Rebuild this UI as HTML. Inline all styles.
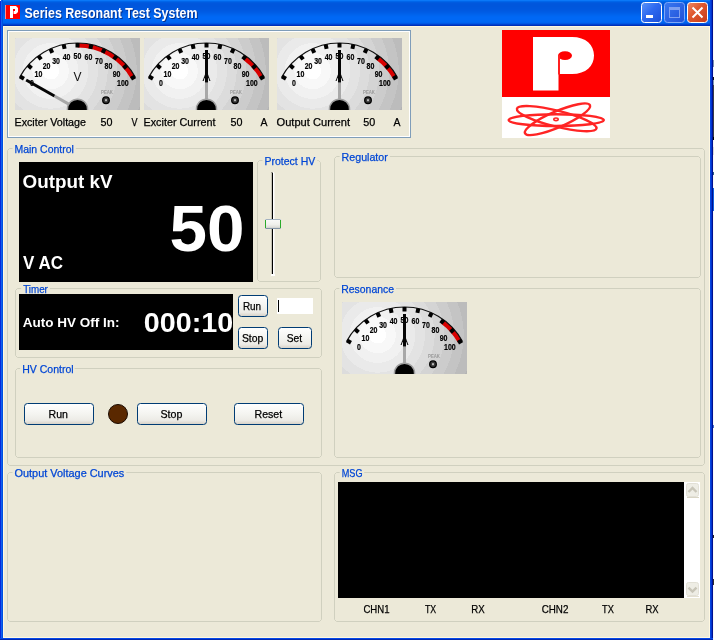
<!DOCTYPE html>
<html><head><meta charset="utf-8"><style>
html,body{margin:0;padding:0;width:714px;height:640px;overflow:hidden;background:#ECE9D8}
</style></head><body>
<svg width="714" height="640" viewBox="0 0 714 640" style="display:block;will-change:transform;font-family:'Liberation Sans', sans-serif">
<defs>
<linearGradient id="title" x1="0" y1="0" x2="0" y2="26" gradientUnits="userSpaceOnUse">
 <stop offset="0" stop-color="#0A72F6"/>
 <stop offset="0.06" stop-color="#0060E6"/>
 <stop offset="0.15" stop-color="#0057DE"/>
 <stop offset="0.45" stop-color="#0058E0"/>
 <stop offset="0.75" stop-color="#0066F2"/>
 <stop offset="0.87" stop-color="#0060EC"/>
 <stop offset="0.92" stop-color="#0050DD"/>
 <stop offset="0.96" stop-color="#0038C4"/>
 <stop offset="1" stop-color="#0030B8"/>
</linearGradient>
<linearGradient id="capmin" x1="0" y1="0" x2="1" y2="1">
 <stop offset="0" stop-color="#5A94F8"/>
 <stop offset="0.45" stop-color="#2E6AF0"/>
 <stop offset="1" stop-color="#1A4FD8"/>
</linearGradient>
<linearGradient id="capmax" x1="0" y1="0" x2="1" y2="1">
 <stop offset="0" stop-color="#3A78F0"/>
 <stop offset="1" stop-color="#2050D8"/>
</linearGradient>
<linearGradient id="capclose" x1="0" y1="0" x2="1" y2="1">
 <stop offset="0" stop-color="#F08A68"/>
 <stop offset="0.4" stop-color="#E05A30"/>
 <stop offset="1" stop-color="#C83C18"/>
</linearGradient>
<linearGradient id="btng" x1="0" y1="0" x2="0" y2="1">
 <stop offset="0" stop-color="#FFFFFF"/>
 <stop offset="0.5" stop-color="#F4F4F0"/>
 <stop offset="0.8" stop-color="#ECEBE6"/>
 <stop offset="1" stop-color="#D6D0C5"/>
</linearGradient>
<radialGradient id="gbg" cx="35.6" cy="33" r="118" gradientUnits="userSpaceOnUse">
 <stop offset="0.0000" stop-color="#FFFFFF"/>
 <stop offset="0.0720" stop-color="#FFFFFF"/>
 <stop offset="0.0720" stop-color="#F8F8F8"/>
 <stop offset="0.1542" stop-color="#F8F8F8"/>
 <stop offset="0.1542" stop-color="#F1F1F1"/>
 <stop offset="0.2364" stop-color="#F1F1F1"/>
 <stop offset="0.2364" stop-color="#EAEAEA"/>
 <stop offset="0.3186" stop-color="#EAEAEA"/>
 <stop offset="0.3186" stop-color="#E3E3E3"/>
 <stop offset="0.4008" stop-color="#E3E3E3"/>
 <stop offset="0.4008" stop-color="#DCDCDC"/>
 <stop offset="0.4831" stop-color="#DCDCDC"/>
 <stop offset="0.4831" stop-color="#D4D4D4"/>
 <stop offset="0.5653" stop-color="#D4D4D4"/>
 <stop offset="0.5653" stop-color="#CCCCCC"/>
 <stop offset="0.6475" stop-color="#CCCCCC"/>
 <stop offset="0.6475" stop-color="#C4C4C4"/>
 <stop offset="0.7297" stop-color="#C4C4C4"/>
 <stop offset="0.7297" stop-color="#BCBCBC"/>
 <stop offset="0.8119" stop-color="#BCBCBC"/>
 <stop offset="0.8119" stop-color="#B4B4B4"/>
 <stop offset="0.8941" stop-color="#B4B4B4"/>
 <stop offset="0.8941" stop-color="#ACACAC"/>
 <stop offset="1.0000" stop-color="#ACACAC"/>
</radialGradient>
<radialGradient id="ledg" cx="0.4" cy="0.4" r="0.6">
 <stop offset="0" stop-color="#C8C8C8"/>
 <stop offset="0.5" stop-color="#808080"/>
 <stop offset="1" stop-color="#404040"/>
</radialGradient>
<linearGradient id="thumbg" x1="0" y1="0" x2="0" y2="1">
 <stop offset="0" stop-color="#F8F8F6"/>
 <stop offset="0.55" stop-color="#F0F0EC"/>
 <stop offset="0.8" stop-color="#E4E4E0"/>
 <stop offset="1" stop-color="#D0D0CC"/>
</linearGradient>
</defs>
<rect x="0" y="0" width="714" height="640" fill="#ECE9D8"/>
<rect x="0" y="0" width="714" height="1" fill="#0A78F8"/>
<rect x="0" y="1" width="714" height="1" fill="#0066EA"/>
<rect x="0" y="2" width="714" height="1" fill="#005BE0"/>
<rect x="0" y="3" width="714" height="1" fill="#0057DD"/>
<rect x="0" y="4" width="714" height="1" fill="#0056DC"/>
<rect x="0" y="5" width="714" height="1" fill="#0056DC"/>
<rect x="0" y="6" width="714" height="1" fill="#0056DC"/>
<rect x="0" y="7" width="714" height="1" fill="#0057DD"/>
<rect x="0" y="8" width="714" height="1" fill="#0057DE"/>
<rect x="0" y="9" width="714" height="1" fill="#0058DF"/>
<rect x="0" y="10" width="714" height="1" fill="#0059E1"/>
<rect x="0" y="11" width="714" height="1" fill="#005BE3"/>
<rect x="0" y="12" width="714" height="1" fill="#005DE6"/>
<rect x="0" y="13" width="714" height="1" fill="#0060E9"/>
<rect x="0" y="14" width="714" height="1" fill="#0063EC"/>
<rect x="0" y="15" width="714" height="1" fill="#0065F0"/>
<rect x="0" y="16" width="714" height="1" fill="#0067F3"/>
<rect x="0" y="17" width="714" height="1" fill="#0068F5"/>
<rect x="0" y="18" width="714" height="1" fill="#0068F5"/>
<rect x="0" y="19" width="714" height="1" fill="#0068F5"/>
<rect x="0" y="20" width="714" height="1" fill="#0068F5"/>
<rect x="0" y="21" width="714" height="1" fill="#0067F4"/>
<rect x="0" y="22" width="714" height="1" fill="#0064F0"/>
<rect x="0" y="23" width="714" height="1" fill="#0058E4"/>
<rect x="0" y="24" width="714" height="1" fill="#0042D0"/>
<rect x="0" y="25" width="714" height="1" fill="#0030B8"/>
<rect x="0" y="0" width="1" height="640" fill="#0828D8"/>
<rect x="1" y="0" width="1" height="640" fill="#1060F0"/>
<rect x="2" y="0" width="1" height="640" fill="#0050E0"/>
<rect x="3" y="26" width="1" height="612" fill="#FFF8E0"/>
<rect x="709" y="26" width="1" height="612" fill="#FFF8E0"/>
<rect x="710" y="0" width="1" height="640" fill="#0544E0"/>
<rect x="711" y="0" width="1" height="640" fill="#0033CC"/>
<rect x="712" y="0" width="1" height="640" fill="#001090"/>
<rect x="713" y="0" width="1" height="640" fill="#F8F8F8"/>
<rect x="713" y="60" width="1" height="7" fill="#7890B0"/>
<rect x="713" y="67" width="1" height="10" fill="#F0F4FF"/>
<rect x="713" y="77" width="1" height="3" fill="#101010"/>
<rect x="713" y="80" width="1" height="5" fill="#8098B0"/>
<rect x="713" y="85" width="1" height="52" fill="#3A3E46"/>
<rect x="713" y="137" width="1" height="3" fill="#000000"/>
<rect x="713" y="140" width="1" height="7" fill="#F4F4F4"/>
<rect x="713" y="147" width="1" height="8" fill="#D8D8D8"/>
<rect x="713" y="172" width="1" height="3" fill="#306080"/>
<rect x="713" y="188" width="1" height="23" fill="#1060E0"/>
<rect x="713" y="425" width="1" height="3" fill="#4070D0"/>
<rect x="713" y="535" width="1" height="3" fill="#202020"/>
<rect x="713" y="579" width="1" height="6" fill="#303030"/>
<rect x="0" y="0" width="1" height="1" fill="#F0F0F0"/>
<rect x="3" y="26" width="707" height="1" fill="#FFF8E0"/>
<rect x="3" y="637" width="707" height="1" fill="#FFF8E0"/>
<rect x="0" y="638" width="713" height="1" fill="#0548E8"/>
<rect x="0" y="639" width="713" height="1" fill="#0028B0"/>
<rect x="5" y="5" width="15" height="14" fill="#FF0000"/>
<rect x="5" y="5" width="1" height="14" fill="#FF9090"/>
<path d="M10,6 H16 L18,8 V12 L16,14 H13 V18 H10 Z" fill="#FFFFFF"/>
<rect x="13" y="9" width="2" height="2" fill="#FF0000"/>
<rect x="13" y="11" width="1" height="3" fill="#FF7070"/>
<text x="25.5" y="19" font-size="14" font-weight="bold" fill="#0A1A60" opacity="0.7" textLength="173" lengthAdjust="spacingAndGlyphs">Series Resonant Test System</text>
<text x="24.5" y="18" font-size="14" font-weight="bold" fill="#FFFFFF" textLength="173" lengthAdjust="spacingAndGlyphs">Series Resonant Test System</text>
<rect x="641.5" y="2.5" width="20" height="20" rx="3" fill="url(#capmin)" stroke="#FFFFFF" stroke-width="1"/>
<rect x="646" y="15" width="7" height="3" fill="#FFFFFF"/>
<rect x="664.5" y="2.5" width="20" height="20" rx="3" fill="url(#capmax)" stroke="#7FA8F8" stroke-width="1"/>
<rect x="669.5" y="7.5" width="10" height="10" fill="none" stroke="#7FA0F0" stroke-width="1"/>
<rect x="669" y="7" width="11" height="3" fill="#7FA0F0"/>
<rect x="687.5" y="2.5" width="20" height="20" rx="3" fill="url(#capclose)" stroke="#FFFFFF" stroke-width="1"/>
<path d="M692.5,7.5 L702.5,17.5 M702.5,7.5 L692.5,17.5" stroke="#FFFFFF" stroke-width="2"/>
<rect x="7.5" y="30.5" width="403" height="107" fill="none" stroke="#7F9DB9"/>
<rect x="8.5" y="31.5" width="401" height="105" fill="none" stroke="#FFFFFF"/>
<g transform="translate(15,38)">
<svg x="0" y="0" width="125" height="72" overflow="hidden">
<rect x="0" y="0" width="125" height="72" fill="url(#gbg)"/>
<path d="M62.50,7.30 A63.7,63.7 0 0 1 117.94,39.63" fill="none" stroke="#D80000" stroke-width="4.6"/>
<path d="M4.50,39.51 A66,66 0 0 1 120.50,39.51" fill="none" stroke="#111" stroke-width="1.2"/>
<line x1="8.97" y1="40.72" x2="5.06" y2="38.50" stroke="#000" stroke-width="4"/>
<line x1="16.51" y1="30.17" x2="13.15" y2="27.18" stroke="#000" stroke-width="4"/>
<line x1="26.09" y1="21.44" x2="23.43" y2="17.81" stroke="#000" stroke-width="4"/>
<line x1="37.29" y1="14.90" x2="35.45" y2="10.80" stroke="#000" stroke-width="4"/>
<line x1="49.61" y1="10.87" x2="48.67" y2="6.47" stroke="#000" stroke-width="4"/>
<line x1="62.50" y1="9.50" x2="62.50" y2="5.00" stroke="#000" stroke-width="4"/>
<line x1="75.39" y1="10.87" x2="76.33" y2="6.47" stroke="#000" stroke-width="4"/>
<line x1="87.71" y1="14.90" x2="89.55" y2="10.80" stroke="#000" stroke-width="4"/>
<line x1="98.91" y1="21.44" x2="101.57" y2="17.81" stroke="#000" stroke-width="4"/>
<line x1="108.49" y1="30.17" x2="111.85" y2="27.18" stroke="#000" stroke-width="4"/>
<line x1="116.03" y1="40.72" x2="119.94" y2="38.50" stroke="#000" stroke-width="4"/>
<text x="17.07" y="47.70" font-size="9.6" font-weight="bold" fill="#000" stroke="#000" stroke-width="0.2" text-anchor="middle" textLength="3.9" lengthAdjust="spacingAndGlyphs">0</text>
<text x="23.46" y="38.74" font-size="9.6" font-weight="bold" fill="#000" stroke="#000" stroke-width="0.2" text-anchor="middle" textLength="7.8" lengthAdjust="spacingAndGlyphs">10</text>
<text x="31.60" y="31.33" font-size="9.6" font-weight="bold" fill="#000" stroke="#000" stroke-width="0.2" text-anchor="middle" textLength="7.8" lengthAdjust="spacingAndGlyphs">20</text>
<text x="41.10" y="25.79" font-size="9.6" font-weight="bold" fill="#000" stroke="#000" stroke-width="0.2" text-anchor="middle" textLength="7.8" lengthAdjust="spacingAndGlyphs">30</text>
<text x="51.56" y="22.36" font-size="9.6" font-weight="bold" fill="#000" stroke="#000" stroke-width="0.2" text-anchor="middle" textLength="7.8" lengthAdjust="spacingAndGlyphs">40</text>
<text x="62.50" y="21.20" font-size="9.6" font-weight="bold" fill="#000" stroke="#000" stroke-width="0.2" text-anchor="middle" textLength="7.8" lengthAdjust="spacingAndGlyphs">50</text>
<text x="73.44" y="22.36" font-size="9.6" font-weight="bold" fill="#000" stroke="#000" stroke-width="0.2" text-anchor="middle" textLength="7.8" lengthAdjust="spacingAndGlyphs">60</text>
<text x="83.90" y="25.79" font-size="9.6" font-weight="bold" fill="#000" stroke="#000" stroke-width="0.2" text-anchor="middle" textLength="7.8" lengthAdjust="spacingAndGlyphs">70</text>
<text x="93.40" y="31.33" font-size="9.6" font-weight="bold" fill="#000" stroke="#000" stroke-width="0.2" text-anchor="middle" textLength="7.8" lengthAdjust="spacingAndGlyphs">80</text>
<text x="101.54" y="38.74" font-size="9.6" font-weight="bold" fill="#000" stroke="#000" stroke-width="0.2" text-anchor="middle" textLength="7.8" lengthAdjust="spacingAndGlyphs">90</text>
<text x="107.93" y="47.70" font-size="9.6" font-weight="bold" fill="#000" stroke="#000" stroke-width="0.2" text-anchor="middle" textLength="11.7" lengthAdjust="spacingAndGlyphs">100</text>
<text x="62.5" y="43" font-size="12.5" fill="#111" text-anchor="middle" textLength="8" lengthAdjust="spacingAndGlyphs">V</text>
<text x="92" y="56" font-size="5" font-weight="bold" fill="#9A9A9A" text-anchor="middle" textLength="12" lengthAdjust="spacingAndGlyphs">PEAK</text>
<circle cx="91" cy="62.2" r="3.3" fill="#3A3A3A" stroke="#000" stroke-width="1.3"/>
<rect x="90" y="61.2" width="2" height="2" fill="#B8B8B8"/>
<line x1="54.67" y1="66.57" x2="39.44" y2="57.95" stroke="#A8A8A8" stroke-width="3"/>
<line x1="39.44" y1="57.95" x2="11.15" y2="41.95" stroke="#050505" stroke-width="3"/>
<circle cx="62.5" cy="71.2" r="10.05" fill="#000" stroke="#A0A0A0" stroke-width="1.5"/>
</svg></g>
<g transform="translate(144,38)">
<svg x="0" y="0" width="125" height="72" overflow="hidden">
<rect x="0" y="0" width="125" height="72" fill="url(#gbg)"/>
<path d="M100.21,19.66 A63.7,63.7 0 0 1 117.94,39.63" fill="none" stroke="#D80000" stroke-width="4.6"/>
<path d="M4.50,39.51 A66,66 0 0 1 120.50,39.51" fill="none" stroke="#111" stroke-width="1.2"/>
<line x1="8.97" y1="40.72" x2="5.06" y2="38.50" stroke="#000" stroke-width="4"/>
<line x1="16.51" y1="30.17" x2="13.15" y2="27.18" stroke="#000" stroke-width="4"/>
<line x1="26.09" y1="21.44" x2="23.43" y2="17.81" stroke="#000" stroke-width="4"/>
<line x1="37.29" y1="14.90" x2="35.45" y2="10.80" stroke="#000" stroke-width="4"/>
<line x1="49.61" y1="10.87" x2="48.67" y2="6.47" stroke="#000" stroke-width="4"/>
<line x1="62.50" y1="9.50" x2="62.50" y2="5.00" stroke="#000" stroke-width="4"/>
<line x1="75.39" y1="10.87" x2="76.33" y2="6.47" stroke="#000" stroke-width="4"/>
<line x1="87.71" y1="14.90" x2="89.55" y2="10.80" stroke="#000" stroke-width="4"/>
<line x1="98.91" y1="21.44" x2="101.57" y2="17.81" stroke="#000" stroke-width="4"/>
<line x1="108.49" y1="30.17" x2="111.85" y2="27.18" stroke="#000" stroke-width="4"/>
<line x1="116.03" y1="40.72" x2="119.94" y2="38.50" stroke="#000" stroke-width="4"/>
<text x="17.07" y="47.70" font-size="9.6" font-weight="bold" fill="#000" stroke="#000" stroke-width="0.2" text-anchor="middle" textLength="3.9" lengthAdjust="spacingAndGlyphs">0</text>
<text x="23.46" y="38.74" font-size="9.6" font-weight="bold" fill="#000" stroke="#000" stroke-width="0.2" text-anchor="middle" textLength="7.8" lengthAdjust="spacingAndGlyphs">10</text>
<text x="31.60" y="31.33" font-size="9.6" font-weight="bold" fill="#000" stroke="#000" stroke-width="0.2" text-anchor="middle" textLength="7.8" lengthAdjust="spacingAndGlyphs">20</text>
<text x="41.10" y="25.79" font-size="9.6" font-weight="bold" fill="#000" stroke="#000" stroke-width="0.2" text-anchor="middle" textLength="7.8" lengthAdjust="spacingAndGlyphs">30</text>
<text x="51.56" y="22.36" font-size="9.6" font-weight="bold" fill="#000" stroke="#000" stroke-width="0.2" text-anchor="middle" textLength="7.8" lengthAdjust="spacingAndGlyphs">40</text>
<text x="62.50" y="21.20" font-size="9.6" font-weight="bold" fill="#000" stroke="#000" stroke-width="0.2" text-anchor="middle" textLength="7.8" lengthAdjust="spacingAndGlyphs">50</text>
<text x="73.44" y="22.36" font-size="9.6" font-weight="bold" fill="#000" stroke="#000" stroke-width="0.2" text-anchor="middle" textLength="7.8" lengthAdjust="spacingAndGlyphs">60</text>
<text x="83.90" y="25.79" font-size="9.6" font-weight="bold" fill="#000" stroke="#000" stroke-width="0.2" text-anchor="middle" textLength="7.8" lengthAdjust="spacingAndGlyphs">70</text>
<text x="93.40" y="31.33" font-size="9.6" font-weight="bold" fill="#000" stroke="#000" stroke-width="0.2" text-anchor="middle" textLength="7.8" lengthAdjust="spacingAndGlyphs">80</text>
<text x="101.54" y="38.74" font-size="9.6" font-weight="bold" fill="#000" stroke="#000" stroke-width="0.2" text-anchor="middle" textLength="7.8" lengthAdjust="spacingAndGlyphs">90</text>
<text x="107.93" y="47.70" font-size="9.6" font-weight="bold" fill="#000" stroke="#000" stroke-width="0.2" text-anchor="middle" textLength="11.7" lengthAdjust="spacingAndGlyphs">100</text>
<text x="62.5" y="43" font-size="12.5" fill="#111" text-anchor="middle" textLength="8" lengthAdjust="spacingAndGlyphs">A</text>
<text x="92" y="56" font-size="5" font-weight="bold" fill="#9A9A9A" text-anchor="middle" textLength="12" lengthAdjust="spacingAndGlyphs">PEAK</text>
<circle cx="91" cy="62.2" r="3.3" fill="#3A3A3A" stroke="#000" stroke-width="1.3"/>
<rect x="90" y="61.2" width="2" height="2" fill="#B8B8B8"/>
<line x1="62.50" y1="62.00" x2="62.50" y2="44.50" stroke="#A8A8A8" stroke-width="3"/>
<line x1="62.50" y1="44.50" x2="62.50" y2="12.00" stroke="#050505" stroke-width="3"/>
<circle cx="62.5" cy="71.2" r="10.05" fill="#000" stroke="#A0A0A0" stroke-width="1.5"/>
</svg></g>
<g transform="translate(277,38)">
<svg x="0" y="0" width="125" height="72" overflow="hidden">
<rect x="0" y="0" width="125" height="72" fill="url(#gbg)"/>
<path d="M100.21,19.66 A63.7,63.7 0 0 1 117.94,39.63" fill="none" stroke="#D80000" stroke-width="4.6"/>
<path d="M4.50,39.51 A66,66 0 0 1 120.50,39.51" fill="none" stroke="#111" stroke-width="1.2"/>
<line x1="8.97" y1="40.72" x2="5.06" y2="38.50" stroke="#000" stroke-width="4"/>
<line x1="16.51" y1="30.17" x2="13.15" y2="27.18" stroke="#000" stroke-width="4"/>
<line x1="26.09" y1="21.44" x2="23.43" y2="17.81" stroke="#000" stroke-width="4"/>
<line x1="37.29" y1="14.90" x2="35.45" y2="10.80" stroke="#000" stroke-width="4"/>
<line x1="49.61" y1="10.87" x2="48.67" y2="6.47" stroke="#000" stroke-width="4"/>
<line x1="62.50" y1="9.50" x2="62.50" y2="5.00" stroke="#000" stroke-width="4"/>
<line x1="75.39" y1="10.87" x2="76.33" y2="6.47" stroke="#000" stroke-width="4"/>
<line x1="87.71" y1="14.90" x2="89.55" y2="10.80" stroke="#000" stroke-width="4"/>
<line x1="98.91" y1="21.44" x2="101.57" y2="17.81" stroke="#000" stroke-width="4"/>
<line x1="108.49" y1="30.17" x2="111.85" y2="27.18" stroke="#000" stroke-width="4"/>
<line x1="116.03" y1="40.72" x2="119.94" y2="38.50" stroke="#000" stroke-width="4"/>
<text x="17.07" y="47.70" font-size="9.6" font-weight="bold" fill="#000" stroke="#000" stroke-width="0.2" text-anchor="middle" textLength="3.9" lengthAdjust="spacingAndGlyphs">0</text>
<text x="23.46" y="38.74" font-size="9.6" font-weight="bold" fill="#000" stroke="#000" stroke-width="0.2" text-anchor="middle" textLength="7.8" lengthAdjust="spacingAndGlyphs">10</text>
<text x="31.60" y="31.33" font-size="9.6" font-weight="bold" fill="#000" stroke="#000" stroke-width="0.2" text-anchor="middle" textLength="7.8" lengthAdjust="spacingAndGlyphs">20</text>
<text x="41.10" y="25.79" font-size="9.6" font-weight="bold" fill="#000" stroke="#000" stroke-width="0.2" text-anchor="middle" textLength="7.8" lengthAdjust="spacingAndGlyphs">30</text>
<text x="51.56" y="22.36" font-size="9.6" font-weight="bold" fill="#000" stroke="#000" stroke-width="0.2" text-anchor="middle" textLength="7.8" lengthAdjust="spacingAndGlyphs">40</text>
<text x="62.50" y="21.20" font-size="9.6" font-weight="bold" fill="#000" stroke="#000" stroke-width="0.2" text-anchor="middle" textLength="7.8" lengthAdjust="spacingAndGlyphs">50</text>
<text x="73.44" y="22.36" font-size="9.6" font-weight="bold" fill="#000" stroke="#000" stroke-width="0.2" text-anchor="middle" textLength="7.8" lengthAdjust="spacingAndGlyphs">60</text>
<text x="83.90" y="25.79" font-size="9.6" font-weight="bold" fill="#000" stroke="#000" stroke-width="0.2" text-anchor="middle" textLength="7.8" lengthAdjust="spacingAndGlyphs">70</text>
<text x="93.40" y="31.33" font-size="9.6" font-weight="bold" fill="#000" stroke="#000" stroke-width="0.2" text-anchor="middle" textLength="7.8" lengthAdjust="spacingAndGlyphs">80</text>
<text x="101.54" y="38.74" font-size="9.6" font-weight="bold" fill="#000" stroke="#000" stroke-width="0.2" text-anchor="middle" textLength="7.8" lengthAdjust="spacingAndGlyphs">90</text>
<text x="107.93" y="47.70" font-size="9.6" font-weight="bold" fill="#000" stroke="#000" stroke-width="0.2" text-anchor="middle" textLength="11.7" lengthAdjust="spacingAndGlyphs">100</text>
<text x="62.5" y="43" font-size="12.5" fill="#111" text-anchor="middle" textLength="8" lengthAdjust="spacingAndGlyphs">A</text>
<text x="92" y="56" font-size="5" font-weight="bold" fill="#9A9A9A" text-anchor="middle" textLength="12" lengthAdjust="spacingAndGlyphs">PEAK</text>
<circle cx="91" cy="62.2" r="3.3" fill="#3A3A3A" stroke="#000" stroke-width="1.3"/>
<rect x="90" y="61.2" width="2" height="2" fill="#B8B8B8"/>
<line x1="62.50" y1="62.00" x2="62.50" y2="44.50" stroke="#A8A8A8" stroke-width="3"/>
<line x1="62.50" y1="44.50" x2="62.50" y2="12.00" stroke="#050505" stroke-width="3"/>
<circle cx="62.5" cy="71.2" r="10.05" fill="#000" stroke="#A0A0A0" stroke-width="1.5"/>
</svg></g>
<text x="14.5" y="126" font-size="11" font-weight="normal" fill="#000" text-anchor="start" textLength="71.5" lengthAdjust="spacingAndGlyphs" stroke="#000" stroke-width="0.25" >Exciter Voltage</text>
<text x="100.5" y="126" font-size="11" font-weight="normal" fill="#000" text-anchor="start" textLength="12" lengthAdjust="spacingAndGlyphs" stroke="#000" stroke-width="0.25" >50</text>
<text x="131.5" y="126" font-size="11" font-weight="normal" fill="#000" text-anchor="start" textLength="6" lengthAdjust="spacingAndGlyphs" stroke="#000" stroke-width="0.25" >V</text>
<text x="143.5" y="126" font-size="11" font-weight="normal" fill="#000" text-anchor="start" textLength="72" lengthAdjust="spacingAndGlyphs" stroke="#000" stroke-width="0.25" >Exciter Current</text>
<text x="230.5" y="126" font-size="11" font-weight="normal" fill="#000" text-anchor="start" textLength="12" lengthAdjust="spacingAndGlyphs" stroke="#000" stroke-width="0.25" >50</text>
<text x="260.5" y="126" font-size="11" font-weight="normal" fill="#000" text-anchor="start" textLength="7" lengthAdjust="spacingAndGlyphs" stroke="#000" stroke-width="0.25" >A</text>
<text x="276.5" y="126" font-size="11" font-weight="normal" fill="#000" text-anchor="start" textLength="73.5" lengthAdjust="spacingAndGlyphs" stroke="#000" stroke-width="0.25" >Output Current</text>
<text x="363.3" y="126" font-size="11" font-weight="normal" fill="#000" text-anchor="start" textLength="12" lengthAdjust="spacingAndGlyphs" stroke="#000" stroke-width="0.25" >50</text>
<text x="393.5" y="126" font-size="11" font-weight="normal" fill="#000" text-anchor="start" textLength="7" lengthAdjust="spacingAndGlyphs" stroke="#000" stroke-width="0.25" >A</text>
<rect x="502" y="30" width="108" height="108" fill="#FFFFFF"/>
<rect x="502" y="30" width="108" height="67" fill="#FF0000"/>
<path d="M533,37 H572 C586,37 594,45 594,55.5 C594,66 586,74 572,74 H558.5 V90.5 H533 Z" fill="#FFFFFF"/>
<ellipse cx="565" cy="55.6" rx="7" ry="4.4" fill="#FF0000"/>
<rect x="558" y="55" width="2" height="19.5" fill="#FF2020"/>
<g fill="none" stroke="#FF2424" stroke-width="2.4"><ellipse cx="556.2" cy="120.1" rx="47.6" ry="5.9"/><ellipse cx="0" cy="0" rx="41" ry="8" transform="translate(556.7,118.6) rotate(14)"/><ellipse cx="0" cy="0" rx="35.4" ry="8" transform="translate(557.5,119.3) rotate(-23.3)"/><ellipse cx="556" cy="119.3" rx="2.2" ry="1.3" stroke-width="1.6"/></g>
<path d="M12.5,148.5 L9.5,148.5 L7.5,150.5 L7.5,463.5 L9.5,465.5 L702.5,465.5 L704.5,463.5 L704.5,150.5 L702.5,148.5 L75.8,148.5" fill="none" stroke="#D0D0BF" stroke-width="1"/>
<text x="14.5" y="153" font-size="11" font-weight="normal" fill="#0046D5" text-anchor="start" textLength="59.3" lengthAdjust="spacingAndGlyphs" stroke="#0046D5" stroke-width="0.25" >Main Control</text>
<rect x="19" y="162" width="234" height="120" fill="#000"/>
<text x="22.5" y="188" font-size="17.5" font-weight="bold" fill="#FFFFFF" text-anchor="start" textLength="90" lengthAdjust="spacingAndGlyphs" >Output kV</text>
<text x="169.5" y="251" font-size="65" font-weight="bold" fill="#FFFFFF" text-anchor="start" textLength="75" lengthAdjust="spacingAndGlyphs" >50</text>
<text x="23" y="269" font-size="17.5" font-weight="bold" fill="#FFFFFF" text-anchor="start" textLength="40" lengthAdjust="spacingAndGlyphs" >V AC</text>
<path d="M262.5,160.5 L259.5,160.5 L257.5,162.5 L257.5,279.5 L259.5,281.5 L318.5,281.5 L320.5,279.5 L320.5,162.5 L318.5,160.5 L317.3,160.5" fill="none" stroke="#D0D0BF" stroke-width="1"/>
<text x="264.5" y="164.7" font-size="11" font-weight="normal" fill="#0046D5" text-anchor="start" textLength="50.8" lengthAdjust="spacingAndGlyphs" stroke="#0046D5" stroke-width="0.25" >Protect HV</text>
<rect x="271" y="173" width="1" height="101" fill="#C4C2B4"/>
<rect x="271" y="172" width="2" height="1" fill="#9C9A90"/>
<rect x="272" y="173" width="1" height="101" fill="#000"/>
<rect x="273" y="172" width="1" height="104" fill="#FFFFFF"/>
<rect x="274" y="173" width="1" height="102" fill="#F6F4EC"/>
<rect x="271" y="274" width="4" height="2" fill="#FFFFFF"/>
<rect x="266" y="220" width="14" height="8" fill="url(#thumbg)"/>
<rect x="266" y="219" width="14" height="1" fill="#A4B2C0"/>
<rect x="266" y="228" width="14" height="1" fill="#8494A6"/>
<rect x="265" y="220" width="1" height="8" fill="#2AAA2A"/>
<rect x="280" y="220" width="1" height="8" fill="#2AAA2A"/>
<rect x="265" y="219" width="1" height="1" fill="#C8D0D8"/>
<rect x="280" y="219" width="1" height="1" fill="#C8D0D8"/>
<rect x="265" y="228" width="1" height="1" fill="#B0B8C0"/>
<rect x="280" y="228" width="1" height="1" fill="#B0B8C0"/>
<path d="M339.6,156.5 L336.5,156.5 L334.5,158.5 L334.5,275.5 L336.5,277.5 L698.5,277.5 L700.5,275.5 L700.5,158.5 L698.5,156.5 L389.8,156.5" fill="none" stroke="#D0D0BF" stroke-width="1"/>
<text x="341.6" y="161" font-size="11" font-weight="normal" fill="#0046D5" text-anchor="start" textLength="46.2" lengthAdjust="spacingAndGlyphs" stroke="#0046D5" stroke-width="0.25" >Regulator</text>
<path d="M21.2,288.5 L17.5,288.5 L15.5,290.5 L15.5,355.5 L17.5,357.5 L319.5,357.5 L321.5,355.5 L321.5,290.5 L319.5,288.5 L49.9,288.5" fill="none" stroke="#D0D0BF" stroke-width="1"/>
<text x="23.2" y="293" font-size="11" font-weight="normal" fill="#0046D5" text-anchor="start" textLength="24.7" lengthAdjust="spacingAndGlyphs" stroke="#0046D5" stroke-width="0.25" >Timer</text>
<rect x="19" y="294" width="214" height="56" fill="#000"/>
<text x="22.7" y="327" font-size="12" font-weight="bold" fill="#FFFFFF" text-anchor="start" textLength="96.8" lengthAdjust="spacingAndGlyphs" >Auto HV Off In:</text>
<text x="143.8" y="332" font-size="28" font-weight="bold" fill="#FFFFFF" text-anchor="start" textLength="89.4" lengthAdjust="spacingAndGlyphs" >000:10</text>
<rect x="238.5" y="295.5" width="29" height="21" rx="3" ry="3" fill="url(#btng)" stroke="#003C74" stroke-width="1"/>
<text x="242.9" y="310" font-size="11" font-weight="normal" fill="#000" text-anchor="start" textLength="18.2" lengthAdjust="spacingAndGlyphs" stroke="#000" stroke-width="0.25" >Run</text>
<rect x="238.5" y="327.5" width="29" height="21" rx="3" ry="3" fill="url(#btng)" stroke="#003C74" stroke-width="1"/>
<text x="241.9" y="341.7" font-size="11" font-weight="normal" fill="#000" text-anchor="start" textLength="21.4" lengthAdjust="spacingAndGlyphs" stroke="#000" stroke-width="0.25" >Stop</text>
<rect x="278.5" y="327.5" width="33" height="21" rx="3" ry="3" fill="url(#btng)" stroke="#003C74" stroke-width="1"/>
<text x="286.7" y="341.7" font-size="11" font-weight="normal" fill="#000" text-anchor="start" textLength="15.4" lengthAdjust="spacingAndGlyphs" stroke="#000" stroke-width="0.25" >Set</text>
<rect x="277" y="298" width="36" height="16" fill="#FFFFFF"/>
<rect x="278" y="300" width="1" height="12" fill="#000"/>
<path d="M20.2,368.5 L17.5,368.5 L15.5,370.5 L15.5,455.5 L17.5,457.5 L319.5,457.5 L321.5,455.5 L321.5,370.5 L319.5,368.5 L74.6,368.5" fill="none" stroke="#D0D0BF" stroke-width="1"/>
<text x="22.2" y="373" font-size="11" font-weight="normal" fill="#0046D5" text-anchor="start" textLength="51.4" lengthAdjust="spacingAndGlyphs" stroke="#0046D5" stroke-width="0.25" >HV Control</text>
<rect x="24.5" y="403.5" width="69" height="21" rx="3" ry="3" fill="url(#btng)" stroke="#003C74" stroke-width="1"/>
<text x="48.5" y="418" font-size="11" font-weight="normal" fill="#000" text-anchor="start" textLength="19.4" lengthAdjust="spacingAndGlyphs" stroke="#000" stroke-width="0.25" >Run</text>
<circle cx="118" cy="414" r="9.5" fill="#5A2800" stroke="#1A0A00" stroke-width="1"/>
<rect x="137.5" y="403.5" width="69" height="21" rx="3" ry="3" fill="url(#btng)" stroke="#003C74" stroke-width="1"/>
<text x="160.5" y="418" font-size="11" font-weight="normal" fill="#000" text-anchor="start" textLength="21.9" lengthAdjust="spacingAndGlyphs" stroke="#000" stroke-width="0.25" >Stop</text>
<rect x="234.5" y="403.5" width="69" height="21" rx="3" ry="3" fill="url(#btng)" stroke="#003C74" stroke-width="1"/>
<text x="254.5" y="418" font-size="11" font-weight="normal" fill="#000" text-anchor="start" textLength="27.7" lengthAdjust="spacingAndGlyphs" stroke="#000" stroke-width="0.25" >Reset</text>
<path d="M339.3,288.5 L336.5,288.5 L334.5,290.5 L334.5,455.5 L336.5,457.5 L698.5,457.5 L700.5,455.5 L700.5,290.5 L698.5,288.5 L396.0,288.5" fill="none" stroke="#D0D0BF" stroke-width="1"/>
<text x="341.3" y="293.2" font-size="11" font-weight="normal" fill="#0046D5" text-anchor="start" textLength="52.7" lengthAdjust="spacingAndGlyphs" stroke="#0046D5" stroke-width="0.25" >Resonance</text>
<g transform="translate(342,302)">
<svg x="0" y="0" width="125" height="72" overflow="hidden">
<rect x="0" y="0" width="125" height="72" fill="url(#gbg)"/>
<path d="M100.21,19.66 A63.7,63.7 0 0 1 117.94,39.63" fill="none" stroke="#D80000" stroke-width="4.6"/>
<path d="M4.50,39.51 A66,66 0 0 1 120.50,39.51" fill="none" stroke="#111" stroke-width="1.2"/>
<line x1="8.97" y1="40.72" x2="5.06" y2="38.50" stroke="#000" stroke-width="4"/>
<line x1="16.51" y1="30.17" x2="13.15" y2="27.18" stroke="#000" stroke-width="4"/>
<line x1="26.09" y1="21.44" x2="23.43" y2="17.81" stroke="#000" stroke-width="4"/>
<line x1="37.29" y1="14.90" x2="35.45" y2="10.80" stroke="#000" stroke-width="4"/>
<line x1="49.61" y1="10.87" x2="48.67" y2="6.47" stroke="#000" stroke-width="4"/>
<line x1="62.50" y1="9.50" x2="62.50" y2="5.00" stroke="#000" stroke-width="4"/>
<line x1="75.39" y1="10.87" x2="76.33" y2="6.47" stroke="#000" stroke-width="4"/>
<line x1="87.71" y1="14.90" x2="89.55" y2="10.80" stroke="#000" stroke-width="4"/>
<line x1="98.91" y1="21.44" x2="101.57" y2="17.81" stroke="#000" stroke-width="4"/>
<line x1="108.49" y1="30.17" x2="111.85" y2="27.18" stroke="#000" stroke-width="4"/>
<line x1="116.03" y1="40.72" x2="119.94" y2="38.50" stroke="#000" stroke-width="4"/>
<text x="17.07" y="47.70" font-size="9.6" font-weight="bold" fill="#000" stroke="#000" stroke-width="0.2" text-anchor="middle" textLength="3.9" lengthAdjust="spacingAndGlyphs">0</text>
<text x="23.46" y="38.74" font-size="9.6" font-weight="bold" fill="#000" stroke="#000" stroke-width="0.2" text-anchor="middle" textLength="7.8" lengthAdjust="spacingAndGlyphs">10</text>
<text x="31.60" y="31.33" font-size="9.6" font-weight="bold" fill="#000" stroke="#000" stroke-width="0.2" text-anchor="middle" textLength="7.8" lengthAdjust="spacingAndGlyphs">20</text>
<text x="41.10" y="25.79" font-size="9.6" font-weight="bold" fill="#000" stroke="#000" stroke-width="0.2" text-anchor="middle" textLength="7.8" lengthAdjust="spacingAndGlyphs">30</text>
<text x="51.56" y="22.36" font-size="9.6" font-weight="bold" fill="#000" stroke="#000" stroke-width="0.2" text-anchor="middle" textLength="7.8" lengthAdjust="spacingAndGlyphs">40</text>
<text x="62.50" y="21.20" font-size="9.6" font-weight="bold" fill="#000" stroke="#000" stroke-width="0.2" text-anchor="middle" textLength="7.8" lengthAdjust="spacingAndGlyphs">50</text>
<text x="73.44" y="22.36" font-size="9.6" font-weight="bold" fill="#000" stroke="#000" stroke-width="0.2" text-anchor="middle" textLength="7.8" lengthAdjust="spacingAndGlyphs">60</text>
<text x="83.90" y="25.79" font-size="9.6" font-weight="bold" fill="#000" stroke="#000" stroke-width="0.2" text-anchor="middle" textLength="7.8" lengthAdjust="spacingAndGlyphs">70</text>
<text x="93.40" y="31.33" font-size="9.6" font-weight="bold" fill="#000" stroke="#000" stroke-width="0.2" text-anchor="middle" textLength="7.8" lengthAdjust="spacingAndGlyphs">80</text>
<text x="101.54" y="38.74" font-size="9.6" font-weight="bold" fill="#000" stroke="#000" stroke-width="0.2" text-anchor="middle" textLength="7.8" lengthAdjust="spacingAndGlyphs">90</text>
<text x="107.93" y="47.70" font-size="9.6" font-weight="bold" fill="#000" stroke="#000" stroke-width="0.2" text-anchor="middle" textLength="11.7" lengthAdjust="spacingAndGlyphs">100</text>
<text x="62.5" y="43" font-size="12.5" fill="#111" text-anchor="middle" textLength="8" lengthAdjust="spacingAndGlyphs">A</text>
<text x="92" y="56" font-size="5" font-weight="bold" fill="#9A9A9A" text-anchor="middle" textLength="12" lengthAdjust="spacingAndGlyphs">PEAK</text>
<circle cx="91" cy="62.2" r="3.3" fill="#3A3A3A" stroke="#000" stroke-width="1.3"/>
<rect x="90" y="61.2" width="2" height="2" fill="#B8B8B8"/>
<line x1="62.50" y1="62.00" x2="62.50" y2="44.50" stroke="#A8A8A8" stroke-width="3"/>
<line x1="62.50" y1="44.50" x2="62.50" y2="12.00" stroke="#050505" stroke-width="3"/>
<circle cx="62.5" cy="71.2" r="10.05" fill="#000" stroke="#A0A0A0" stroke-width="1.5"/>
</svg></g>
<path d="M12.5,472.5 L9.5,472.5 L7.5,474.5 L7.5,619.5 L9.5,621.5 L319.5,621.5 L321.5,619.5 L321.5,474.5 L319.5,472.5 L126.3,472.5" fill="none" stroke="#D0D0BF" stroke-width="1"/>
<text x="14.5" y="476.7" font-size="11" font-weight="normal" fill="#0046D5" text-anchor="start" textLength="109.8" lengthAdjust="spacingAndGlyphs" stroke="#0046D5" stroke-width="0.25" >Output Voltage Curves</text>
<path d="M339.7,472.5 L336.5,472.5 L334.5,474.5 L334.5,619.5 L336.5,621.5 L702.5,621.5 L704.5,619.5 L704.5,474.5 L702.5,472.5 L364.2,472.5" fill="none" stroke="#D0D0BF" stroke-width="1"/>
<text x="341.7" y="477" font-size="11" font-weight="normal" fill="#0046D5" text-anchor="start" textLength="20.8" lengthAdjust="spacingAndGlyphs" stroke="#0046D5" stroke-width="0.25" >MSG</text>
<rect x="338" y="482" width="346" height="116" fill="#000"/>
<rect x="684" y="482" width="16" height="116" fill="#FFFFFF"/>
<rect x="686.5" y="483.5" width="12" height="13" rx="2" fill="#EEEDE5" stroke="#E2E0D6"/>
<rect x="687" y="497" width="12" height="1" fill="#D8D4C4"/>
<path d="M688.5,492 L692.5,488 L696.5,492" fill="none" stroke="#C8C5B8" stroke-width="2.4"/>
<rect x="686.5" y="582.5" width="12" height="13" rx="2" fill="#EEEDE5" stroke="#E2E0D6"/>
<rect x="687" y="596" width="12" height="1" fill="#E4E0D2"/>
<path d="M688.5,587.6 L692.5,591.6 L696.5,587.6" fill="none" stroke="#C8C5B8" stroke-width="2.4"/>
<text x="363.4" y="613.2" font-size="11" font-weight="normal" fill="#000" text-anchor="start" textLength="26.1" lengthAdjust="spacingAndGlyphs" stroke="#000" stroke-width="0.25" >CHN1</text>
<text x="425" y="613.2" font-size="11" font-weight="normal" fill="#000" text-anchor="start" textLength="11.2" lengthAdjust="spacingAndGlyphs" stroke="#000" stroke-width="0.25" >TX</text>
<text x="471.3" y="613.2" font-size="11" font-weight="normal" fill="#000" text-anchor="start" textLength="13.4" lengthAdjust="spacingAndGlyphs" stroke="#000" stroke-width="0.25" >RX</text>
<text x="541.7" y="613.2" font-size="11" font-weight="normal" fill="#000" text-anchor="start" textLength="26.7" lengthAdjust="spacingAndGlyphs" stroke="#000" stroke-width="0.25" >CHN2</text>
<text x="602" y="613.2" font-size="11" font-weight="normal" fill="#000" text-anchor="start" textLength="11.8" lengthAdjust="spacingAndGlyphs" stroke="#000" stroke-width="0.25" >TX</text>
<text x="645.5" y="613.2" font-size="11" font-weight="normal" fill="#000" text-anchor="start" textLength="13.1" lengthAdjust="spacingAndGlyphs" stroke="#000" stroke-width="0.25" >RX</text>
</svg>
</body></html>
